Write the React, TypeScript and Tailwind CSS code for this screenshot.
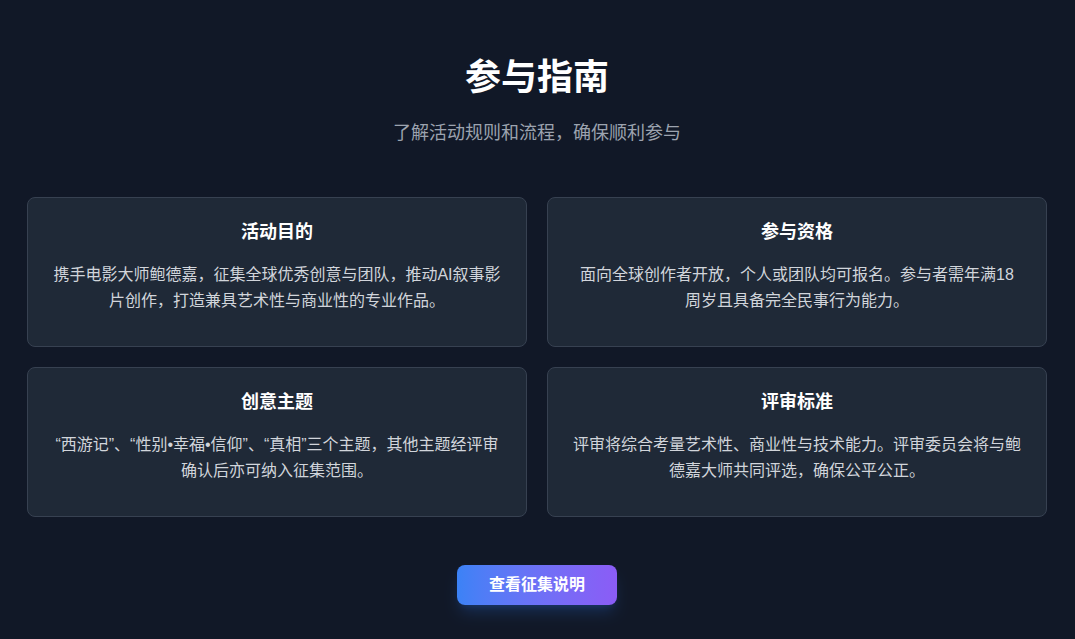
import React from "react";

const cards = [
  {
    title: "活动目的",
    text: "携手电影大师鲍德嘉，征集全球优秀创意与团队，推动AI叙事影片创作，打造兼具艺术性与商业性的专业作品。",
  },
  {
    title: "参与资格",
    text: "面向全球创作者开放，个人或团队均可报名。参与者需年满18周岁且具备完全民事行为能力。",
  },
  {
    title: "创意主题",
    text: "“西游记”、“性别•幸福•信仰”、“真相”三个主题，其他主题经评审确认后亦可纳入征集范围。",
  },
  {
    title: "评审标准",
    text: "评审将综合考量艺术性、商业性与技术能力。评审委员会将与鲍德嘉大师共同评选，确保公平公正。",
  },
];

export default function App() {
  return (
    <div
      className="min-h-[639px] w-full bg-[#111827] text-white"
      style={{ fontFamily: '"Liberation Sans", "Noto Sans CJK SC", sans-serif' }}
    >
      <div className="pl-[27px] pr-[28px] pt-[58px] pb-[34px]">
        <h2 className="text-center text-4xl leading-[40px] font-bold text-white">参与指南</h2>
        <p className="mt-[21px] text-center text-lg leading-7 text-[#9ca3af]">
          了解活动规则和流程，确保顺利参与
        </p>
        <div className="mt-[50px] grid grid-cols-2 gap-5">
          {cards.map((c) => (
            <div
              key={c.title}
              className="rounded-lg border border-[#374151] bg-[#1f2937] px-[25px] pt-5 pb-8 text-center"
            >
              <h3 className="text-lg leading-7 font-bold text-white">{c.title}</h3>
              <p className="mt-4 text-base leading-[26px] text-[#d1d5db]">{c.text}</p>
            </div>
          ))}
        </div>
        <div className="mt-[48px] flex justify-center">
          <button className="h-10 rounded-lg bg-gradient-to-r from-[#3b82f6] to-[#8b5cf6] px-8 text-base font-bold text-white shadow-lg shadow-blue-500/20">
            查看征集说明
          </button>
        </div>
      </div>
    </div>
  );
}
